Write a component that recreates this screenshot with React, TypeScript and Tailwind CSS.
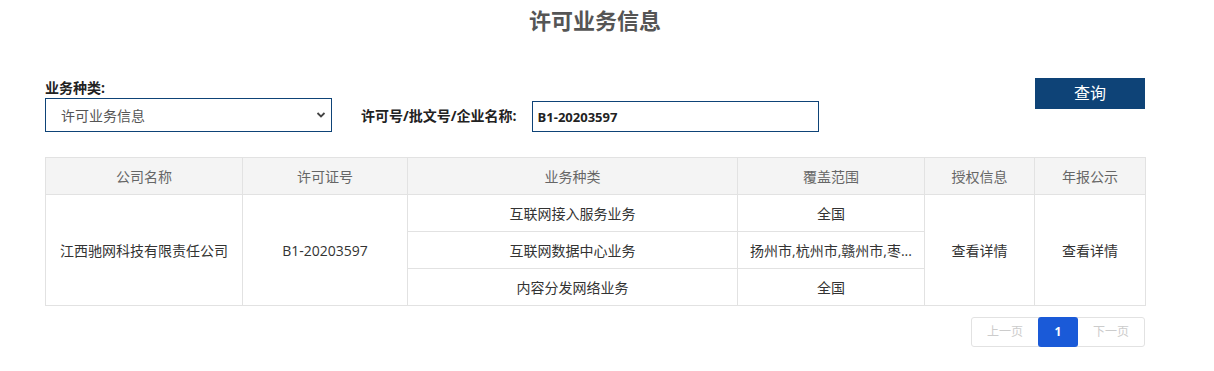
const COLS = [
  { label: "公司名称", w: "w-[197px]" },
  { label: "许可证号", w: "w-[165px]" },
  { label: "业务种类", w: "w-[330px]" },
  { label: "覆盖范围", w: "w-[187px]" },
  { label: "授权信息", w: "w-[110px]" },
  { label: "年报公示", w: "w-[111px]" },
];

const ROWS = [
  { biz: "互联网接入服务业务", area: "全国" },
  { biz: "互联网数据中心业务", area: "扬州市,杭州市,赣州市,枣..." },
  { biz: "内容分发网络业务", area: "全国" },
];

const font = "font-['Open_Sans','Noto_Sans_CJK_SC',sans-serif]";

export default function App() {
  return (
    <div className={`w-[1214px] h-[371px] bg-white ${font}`}>
      <div className="w-[1100px] ml-[45px]">
        {/* title */}
        <h1 className="h-[40px] text-center text-[22px] leading-[40px] font-bold text-[#555]">
          许可业务信息
        </h1>

        {/* search form */}
        <div className="mt-[38px] flex items-start justify-between">
          <div className="flex items-end">
            <div className="flex flex-col">
              <label className="mt-[1px] text-[14px] leading-[17px] font-bold text-[#222]">业务种类:</label>
              <div className="relative mt-[2px]">
                <select
                  className="w-[287px] h-[34px] border border-[#0e4377] pl-[15px] text-[14px] text-[#555] bg-white appearance-none outline-none"
                  defaultValue="许可业务信息"
                >
                  <option>许可业务信息</option>
                </select>
                <svg className="absolute right-[6px] top-[13px] pointer-events-none" width="10" height="8" viewBox="0 0 10 8">
                  <path d="M1.5 2 L5 5.5 L8.5 2" fill="none" stroke="#444" strokeWidth="1.8" />
                </svg>
              </div>
            </div>
            <label className="ml-[29px] mb-[8px] text-[14px] leading-[17px] font-bold text-[#222]">
              许可号/批文号/企业名称:
            </label>
            <input
              className="ml-[15px] w-[287px] h-[31px] border border-[#0e4377] px-[5px] text-[13px] font-bold text-[#222] outline-none"
              defaultValue="B1-20203597"
            />
          </div>
          <button className="w-[110px] h-[31px] bg-[#0e4377] text-white text-[16px] leading-[31px]">查询</button>
        </div>

        {/* table */}
        <table className="mt-[25px] w-[1100px] table-fixed border-collapse text-[14px]">
          <thead>
            <tr className="h-[37px] bg-[#f4f4f4]">
              {COLS.map((c) => (
                <th key={c.label} className={`${c.w} border border-[#e2e2e2] font-normal text-[#666]`}>
                  {c.label}
                </th>
              ))}
            </tr>
          </thead>
          <tbody className="text-[#333]">
            {ROWS.map((r, i) => (
              <tr key={r.biz} className="h-[37px]">
                {i === 0 && (
                  <>
                    <td rowSpan={3} className="border border-[#e2e2e2] text-center">江西驰网科技有限责任公司</td>
                    <td rowSpan={3} className="border border-[#e2e2e2] text-center">B1-20203597</td>
                  </>
                )}
                <td className="border border-[#e2e2e2] text-center">{r.biz}</td>
                <td className="border border-[#e2e2e2] text-center whitespace-nowrap">{r.area}</td>
                {i === 0 && (
                  <>
                    <td rowSpan={3} className="border border-[#e2e2e2] text-center">查看详情</td>
                    <td rowSpan={3} className="border border-[#e2e2e2] text-center">查看详情</td>
                  </>
                )}
              </tr>
            ))}
          </tbody>
        </table>

        {/* pagination */}
        <div className="mt-[11px] flex justify-end">
          <div className="flex h-[30px] border border-[#e2e2e2] rounded-[3px] text-[12px]">
            <button className="w-[66px] text-[#ccc]">上一页</button>
            <button className="w-[40px] -my-px bg-[#1a5ad8] text-white rounded-[3px] font-bold">1</button>
            <button className="w-[66px] text-[#ccc]">下一页</button>
          </div>
        </div>
      </div>
    </div>
  );
}
